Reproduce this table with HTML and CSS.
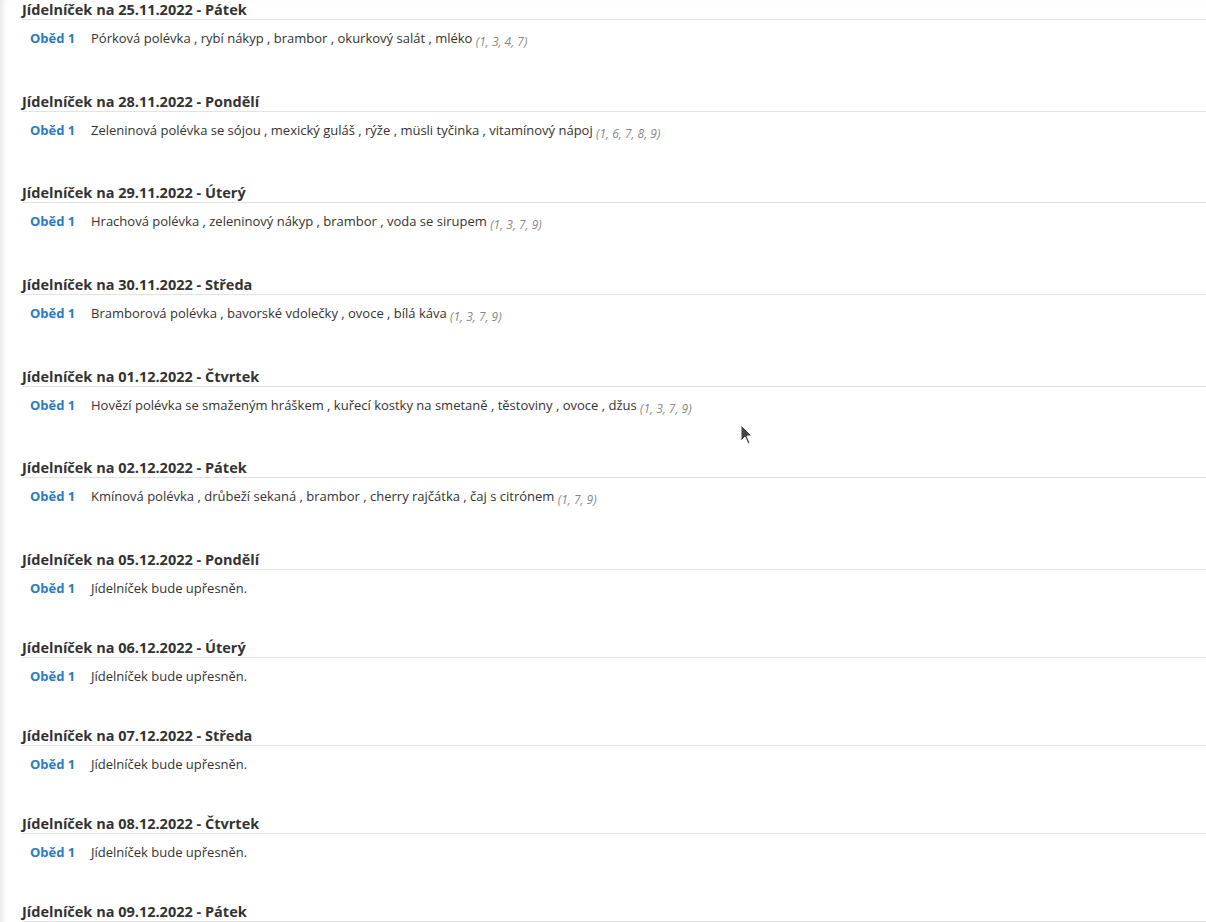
FILE: index.html
```html
<!DOCTYPE html>
<html lang="cs">
<head>
  <meta charset="UTF-8">
  <meta name="viewport" content="width=device-width, initial-scale=1.0">
  <title>Jídelníček</title>
  <link rel="stylesheet" href="styles.css">
</head>
<body>
  <div class="page">
    <div class="day">
      <h2>Jídelníček na 25.11.2022 - Pátek</h2>
      <div class="meal"><span class="meal-name">Oběd 1</span><span class="meal-text">Pórková polévka , rybí nákyp , brambor , okurkový salát , mléko <span class="allergens">(1, 3, 4, 7)</span></span></div>
    </div>
    <div class="day">
      <h2>Jídelníček na 28.11.2022 - Pondělí</h2>
      <div class="meal"><span class="meal-name">Oběd 1</span><span class="meal-text">Zeleninová polévka se sójou , mexický guláš , rýže , müsli tyčinka , vitamínový nápoj <span class="allergens">(1, 6, 7, 8, 9)</span></span></div>
    </div>
    <div class="day">
      <h2>Jídelníček na 29.11.2022 - Úterý</h2>
      <div class="meal"><span class="meal-name">Oběd 1</span><span class="meal-text">Hrachová polévka , zeleninový nákyp , brambor , voda se sirupem <span class="allergens">(1, 3, 7, 9)</span></span></div>
    </div>
    <div class="day">
      <h2>Jídelníček na 30.11.2022 - Středa</h2>
      <div class="meal"><span class="meal-name">Oběd 1</span><span class="meal-text">Bramborová polévka , bavorské vdolečky , ovoce , bílá káva <span class="allergens">(1, 3, 7, 9)</span></span></div>
    </div>
    <div class="day">
      <h2>Jídelníček na 01.12.2022 - Čtvrtek</h2>
      <div class="meal"><span class="meal-name">Oběd 1</span><span class="meal-text">Hovězí polévka se smaženým hráškem , kuřecí kostky na smetaně , těstoviny , ovoce , džus <span class="allergens">(1, 3, 7, 9)</span></span></div>
    </div>
    <div class="day">
      <h2>Jídelníček na 02.12.2022 - Pátek</h2>
      <div class="meal"><span class="meal-name">Oběd 1</span><span class="meal-text">Kmínová polévka , drůbeží sekaná , brambor , cherry rajčátka , čaj s citrónem <span class="allergens">(1, 7, 9)</span></span></div>
    </div>
    <div class="day">
      <h2>Jídelníček na 05.12.2022 - Pondělí</h2>
      <div class="meal"><span class="meal-name">Oběd 1</span><span class="meal-text">Jídelníček bude upřesněn.</span></div>
    </div>
    <div class="day">
      <h2>Jídelníček na 06.12.2022 - Úterý</h2>
      <div class="meal"><span class="meal-name">Oběd 1</span><span class="meal-text">Jídelníček bude upřesněn.</span></div>
    </div>
    <div class="day">
      <h2>Jídelníček na 07.12.2022 - Středa</h2>
      <div class="meal"><span class="meal-name">Oběd 1</span><span class="meal-text">Jídelníček bude upřesněn.</span></div>
    </div>
    <div class="day">
      <h2>Jídelníček na 08.12.2022 - Čtvrtek</h2>
      <div class="meal"><span class="meal-name">Oběd 1</span><span class="meal-text">Jídelníček bude upřesněn.</span></div>
    </div>
    <div class="day">
      <h2>Jídelníček na 09.12.2022 - Pátek</h2>
      <div class="meal"><span class="meal-name">Oběd 1</span><span class="meal-text">Jídelníček bude upřesněn.</span></div>
    </div>
  </div>

  <!-- mouse pointer visible in the capture -->
  <svg class="cursor" width="14" height="22" viewBox="0 0 14 22">
    <path d="M1 1 L1 17 L5 13 L8 20 L10 19 L7 12 L12 12 Z" fill="#444" stroke="#fff" stroke-width="1"/>
  </svg>
</body>
</html>
```

FILE: styles.css
```css
body {
  margin: 0;
  font-family: "Open Sans", Arial, sans-serif;
  color: #333;
  background: #fff;
  overflow: hidden;
}

.page {
  padding-left: 22px;
  box-shadow: inset 6px 0 6px -4px rgba(0, 0, 0, 0.12);
  min-height: 922px;
}

.day {
  padding-bottom: 41px;
}

.day h2 {
  margin: 0;
  font-size: 14.5px;
  font-weight: bold;
  line-height: 19px;
  border-bottom: 1px solid #e3e3e3;
}

.meal {
  display: flex;
  margin-top: 9px;
  padding-left: 8px;
  font-size: 13px;
  line-height: 18px;
}

.meal-name {
  width: 61px;
  flex-shrink: 0;
  font-weight: bold;
  color: #2a7bc1;
}

.allergens {
  font-size: 12px;
  font-style: italic;
  color: #888;
  vertical-align: -2.67px;
}

.cursor {
  position: absolute;
  left: 740px;
  top: 424px;
}
```
